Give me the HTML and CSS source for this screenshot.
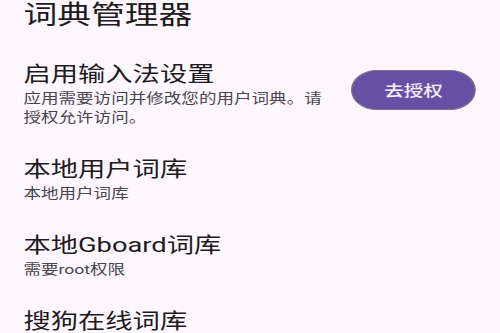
FILE: index.html
```html
<!DOCTYPE html>
<html>
<head>
  <title>词典管理器</title>
  <link rel="stylesheet" href="styles.css">
</head>
<body>

  <div class="screen">
    <h1 class="page-title">词典管理器</h1>

    <div class="list">
      <div class="item">
        <div class="item-text">
          <div class="item-title">启用输入法设置</div>
          <div class="item-sub">应用需要访问并修改您的用户词典。请授权允许访问。</div>
        </div>
        <button class="grant">去授权</button>
      </div>

      <div class="item">
        <div class="item-text">
          <div class="item-title">本地用户词库</div>
          <div class="item-sub">本地用户词库</div>
        </div>
      </div>

      <div class="item">
        <div class="item-text">
          <div class="item-title">本地Gboard词库</div>
          <div class="item-sub">需要root权限</div>
        </div>
      </div>

      <div class="item">
        <div class="item-text">
          <div class="item-title">搜狗在线词库</div>
        </div>
      </div>
    </div>
  </div>

</body>
</html>
```

FILE: styles.css
```css
html, body {
  margin: 0;
  height: 100%;
  overflow: hidden;
  background-color: #fef7ff;
}

body {
  font-family: Roboto, "Noto Sans CJK SC", sans-serif;
  color: #1d1b20;
}

/* the capture is wider than it is tall, so the whole screen is stretched */
.screen {
  width: 384px;
  padding: 0 18px;
  box-sizing: border-box;
  transform: scaleX(1.3);
  transform-origin: 0 0;
}

.page-title {
  margin: 0;
  font-size: 26px;
  line-height: 30px;
  font-weight: 400;
}

.list {
  margin-top: 16px;
}

.item {
  display: flex;
  align-items: center;
  gap: 12px;
  padding: 14px 0;
}

.item-text {
  flex: 1;
}

.item-title {
  font-size: 21px;
  line-height: 28px;
  margin-bottom: 1px;
}

.item-sub {
  font-size: 13.5px;
  line-height: 19px;
  color: #49454f;
}

.grant {
  flex: none;
  width: 96px;
  height: 40px;
  border: 1.5px solid #7a7289;
  border-radius: 20px;
  background-color: #6650a4;
  color: #f6f0ff;
  font-family: Roboto, "Noto Sans CJK SC", sans-serif;
  font-size: 15px;
  font-weight: 500;
  margin-top: -8px;
}
```
